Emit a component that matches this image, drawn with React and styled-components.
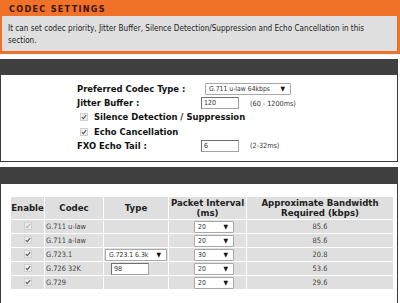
import React from "react";
import styled, { createGlobalStyle } from "styled-components";

const GlobalStyle = createGlobalStyle`
  body {
    margin: 0;
    background: #ffffff;
    font-family: "DejaVu Sans", Verdana, sans-serif;
    font-stretch: condensed;
  }
`;

const Page = styled.div`
  width: 398px;
  display: flex;
  flex-direction: column;
  gap: 5px;
`;

const OrangeBox = styled.div`
  width: 400px;
  background: #f07128;
  padding: 0 3px 3px 2px;
  box-sizing: border-box;
`;

const Title = styled.h1`
  margin: 0;
  height: 16px;
  line-height: 18px;
  padding-left: 7px;
  font-size: 9px;
  font-weight: bold;
  letter-spacing: 1.3px;
  color: #3b1604;
`;

const Info = styled.p`
  margin: 0;
  background: #dfdfdf;
  height: 35px;
  padding: 6px 3px 0 6px;
  box-sizing: border-box;
  font-size: 8.1px;
  line-height: 12px;
  color: #222;
`;

const Section = styled.section`
  display: flex;
  flex-direction: column;
`;

const DarkBar = styled.div`
  height: ${(p) => p.$h}px;
  background: #404040;
`;

const Panel = styled.div`
  border: 1px solid #3a3a3a;
  border-top: none;
  background: #fff;
  height: ${(p) => p.$h}px;
  box-sizing: border-box;
  padding: ${(p) => p.$pad};
`;

const FormGrid = styled.div`
  display: grid;
  grid-template-columns: 124px auto;
  align-items: center;
`;

const Label = styled.div`
  font-size: 9.4px;
  font-weight: bold;
  color: #111;
  height: 14.2px;
  line-height: 14px;
  white-space: nowrap;
`;

const CheckLabel = styled(Label)`
  grid-column: 1 / span 2;
  display: flex;
  align-items: center;
  gap: 6px;
  margin-left: 3px;
`;

const Field = styled.div`
  display: flex;
  align-items: center;
  gap: 11px;
  height: 14.2px;
`;

const Hint = styled.span`
  font-size: 7.2px;
  color: #333;
`;

const TextBox = styled.span`
  display: inline-block;
  width: ${(p) => p.$w}px;
  height: 12px;
  box-sizing: border-box;
  border: 1px solid #a4a4a4;
  border-top-color: #6e6e6e;
  border-left-color: #6e6e6e;
  background: #fff;
  font-size: 7px;
  line-height: 10px;
  padding-left: 2px;
  color: #333;
  text-align: left;
  margin-right: ${(p) => p.$mr || 0}px;
`;

const SelectBox = styled.span`
  display: inline-flex;
  justify-content: space-between;
  align-items: center;
  width: ${(p) => p.$w}px;
  height: 12px;
  box-sizing: border-box;
  border: 1px solid #a8a8a8;
  border-radius: 1px;
  background: #fff;
  font-size: 6.8px;
  padding: 0 5px 0 3px;
  color: #333;
  margin-left: ${(p) => p.$ml || 0}px;
`;

const Arrow = styled.span`
  font-size: 6.5px;
  color: #111;
`;

const CheckBox = styled.span`
  display: inline-flex;
  align-items: center;
  justify-content: center;
  width: 8px;
  height: 8px;
  box-sizing: border-box;
  border: 1px solid #cfcfcf;
  background: #ececec;
  svg {
    display: block;
  }
`;

const Table = styled.table`
  border-collapse: separate;
  border-spacing: 1px 1px;
  margin-left: 9px;
  width: 384px;
  table-layout: fixed;
`;

const Th = styled.th`
  background: #dfdfdf;
  height: 22px;
  padding: 0;
  font-size: 8.6px;
  font-stretch: normal;
  font-weight: bold;
  color: #222;
  line-height: 10.5px;
  text-align: center;
  white-space: nowrap;
`;

const Td = styled.td`
  background: #dfdfdf;
  height: 13px;
  padding: 0 ${(p) => (p.$left ? "1px" : "0")};
  font-size: 7.4px;
  color: #444;
  text-align: ${(p) => (p.$left ? "left" : "center")};
  vertical-align: middle;
  white-space: nowrap;
`;

const Check = ({ faint }) => (
  <CheckBox>
    <svg width="6" height="6" viewBox="0 0 6 6">
      <path
        d="M0.8 3.1 L2.3 4.6 L5.2 1.2"
        fill="none"
        stroke={faint ? "#b4b4b4" : "#5a5a5a"}
        strokeWidth="1.1"
      />
    </svg>
  </CheckBox>
);

const Select = ({ value, w, ml }) => (
  <SelectBox $w={w} $ml={ml}>
    <span>{value}</span>
    <Arrow>▼</Arrow>
  </SelectBox>
);

const codecs = [
  { name: "G.711 u-law", interval: "20", bw: "85.6", faint: true },
  { name: "G.711 a-law", interval: "20", bw: "85.6" },
  { name: "G.723.1", interval: "30", bw: "20.8", type: "select" },
  { name: "G.726 32K", interval: "20", bw: "53.6", type: "input" },
  { name: "G.729", interval: "20", bw: "29.6" },
];

export default function App() {
  return (
    <>
      <GlobalStyle />
      <Page>
        <OrangeBox>
          <Title>CODEC SETTINGS</Title>
          <Info>
            It can set codec priority, Jitter Buffer, Silence Detection/Suppression and
            Echo Cancellation in this section.
          </Info>
        </OrangeBox>

        <Section>
          <DarkBar $h={16} />
          <Panel $h={87} $pad="7px 0 0 76px">
            <FormGrid>
              <Label>Preferred Codec Type :</Label>
              <Field>
                <Select value="G.711 u-law 64kbps" w={86} ml={4} />
              </Field>
              <Label>Jitter Buffer :</Label>
              <Field>
                <TextBox $w={38}>120</TextBox>
                <Hint>(60 - 1200ms)</Hint>
              </Field>
              <CheckLabel>
                <Check />
                Silence Detection / Suppression
              </CheckLabel>
              <CheckLabel>
                <Check />
                Echo Cancellation
              </CheckLabel>
              <Label>FXO Echo Tail :</Label>
              <Field>
                <TextBox $w={38}>6</TextBox>
                <Hint>(2-32ms)</Hint>
              </Field>
            </FormGrid>
          </Panel>
        </Section>

        <Section>
          <DarkBar $h={17} />
          <Panel $h={120} $pad="12px 0 0 0">
            <Table>
              <colgroup>
                <col style={{ width: 33 }} />
                <col style={{ width: 58 }} />
                <col style={{ width: 64 }} />
                <col style={{ width: 77 }} />
                <col />
              </colgroup>
              <thead>
                <tr>
                  <Th>Enable</Th>
                  <Th>Codec</Th>
                  <Th>Type</Th>
                  <Th>
                    Packet Interval
                    <br />
                    (ms)
                  </Th>
                  <Th>
                    Approximate Bandwidth
                    <br />
                    Required (kbps)
                  </Th>
                </tr>
              </thead>
              <tbody>
                {codecs.map((c) => (
                  <tr key={c.name}>
                    <Td>
                      <Check faint={c.faint} />
                    </Td>
                    <Td $left>{c.name}</Td>
                    <Td>
                      {c.type === "select" && <Select value="G.723.1 6.3k" w={62} />}
                      {c.type === "input" && (
                        <TextBox $w={38} $mr={12}>
                          98
                        </TextBox>
                      )}
                    </Td>
                    <Td $left>
                      <Select value={c.interval} w={40} ml={24} />
                    </Td>
                    <Td>{c.bw}</Td>
                  </tr>
                ))}
              </tbody>
            </Table>
          </Panel>
        </Section>
      </Page>
    </>
  );
}
